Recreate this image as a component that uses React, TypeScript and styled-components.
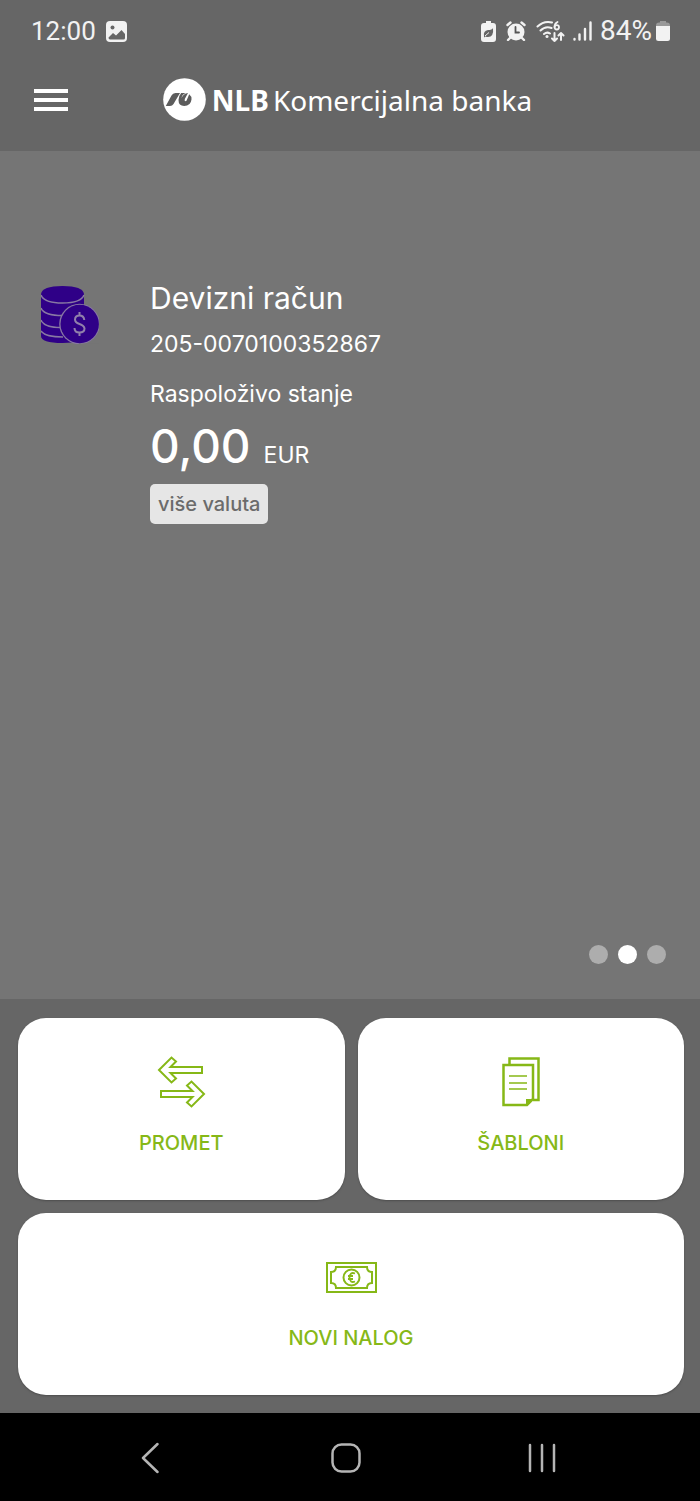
import React from "react";
import styled, { createGlobalStyle } from "styled-components";

const GlobalStyle = createGlobalStyle`
  * { box-sizing: border-box; }
  body { margin: 0; background: #666666; }
  button { font: inherit; color: inherit; border: 0; padding: 0; background: none; cursor: pointer; }
  svg { display: block; flex: none; }
`;

const Screen = styled.div`
  min-height: 100vh;
  display: flex;
  flex-direction: column;
  color: #ffffff;
  font-family: Inter, "Open Sans", sans-serif;
`;

const StatusBar = styled.div`
  display: flex;
  justify-content: space-between;
  align-items: center;
  height: 62px;
  padding: 0 30px 0 31px;
  color: #f2f2f2;
  font-family: Roboto, sans-serif;
  font-size: 26px;
  line-height: 32px;
`;

const StatusGroup = styled.div<{ $gap: number }>`
  display: flex;
  align-items: center;
  gap: ${({ $gap }) => $gap}px;
`;

const BatteryLevel = styled.span`
  font-size: 28px;
`;

const Header = styled.header`
  display: grid;
  grid-template-columns: 1fr auto 1fr;
  align-items: center;
  height: 89px;
  padding: 0 39px 14px 34px;
`;

const MenuButton = styled.button`
  justify-self: start;
`;

const Brand = styled.div`
  display: flex;
  align-items: center;
  gap: 6px;
  font-family: "Noto Sans", sans-serif;
  font-size: 28px;
  line-height: 40px;
  white-space: nowrap;
`;

const BrandName = styled.span`
  display: flex;
  gap: 4px;
`;

const AccountPanel = styled.main`
  flex: 1;
  display: flex;
  flex-direction: column;
  justify-content: space-between;
  padding: 129px 34px 35px 41px;
  background: #757575;
`;

const Account = styled.section`
  display: grid;
  grid-template-columns: 58px 1fr;
  column-gap: 51px;
`;

const AccountIcon = styled.div`
  padding-top: 6px;
`;

const Details = styled.div`
  display: flex;
  flex-direction: column;
  align-items: flex-start;
`;

const Title = styled.h1`
  margin: 0;
  font-size: 30px;
  font-weight: 400;
  line-height: 36px;
`;

const Line = styled.p<{ $top: number }>`
  margin: ${({ $top }) => $top}px 0 0;
  font-size: 23px;
  line-height: 28px;
`;

const Balance = styled.p`
  display: flex;
  align-items: baseline;
  gap: 13px;
  margin: 10px 0 1px;
  font-size: 23px;
  line-height: 56px;
`;

const Amount = styled.strong`
  font-size: 46px;
  font-weight: 500;
`;

const CurrencyButton = styled.button`
  height: 40px;
  padding: 0 8px;
  border-radius: 5px;
  background: #e6e6e6;
  color: #6b6b6b;
  font-size: 20px;
  font-weight: 500;
  line-height: 24px;
`;

const Dots = styled.nav`
  display: flex;
  justify-content: flex-end;
  gap: 10px;
`;

const Dot = styled.button<{ $active?: boolean }>`
  width: 19px;
  height: 19px;
  border-radius: 50%;
  background: ${({ $active }) => ($active ? "#ffffff" : "#adadad")};
`;

const Actions = styled.section`
  display: grid;
  grid-template-columns: 1fr 1fr;
  gap: 13px;
  padding: 19px 16px 18px 18px;
`;

const ActionCard = styled.button<{ $wide?: boolean }>`
  display: flex;
  flex-direction: column;
  align-items: center;
  justify-content: flex-end;
  gap: 22px;
  height: 182px;
  padding-bottom: 45px;
  grid-column: ${({ $wide }) => ($wide ? "1 / -1" : "auto")};
  border-radius: 28px;
  background: #ffffff;
  box-shadow: 0 1px 2px #4d4d4d;
  color: #86b817;
  font-size: 20px;
  font-weight: 500;
  line-height: 24px;
`;

const IconSlot = styled.span`
  display: flex;
  align-items: center;
  height: 54px;
`;

const SystemNav = styled.nav`
  display: grid;
  grid-template-columns: repeat(3, 1fr);
  height: 88px;
  padding: 2px 60px 0 52px;
  background: #000000;
`;

const NavButton = styled.button`
  display: flex;
  align-items: center;
  justify-content: center;
  color: #b5b5b5;
`;

const ImageIcon = () => (
  <svg width="21" height="21" viewBox="0 0 21 21">
    <rect width="21" height="21" rx="4" fill="#f2f2f2" />
    <circle cx="6.5" cy="6.5" r="2" fill="#666" />
    <path d="M2.5 16.5 7 12l3 2.5L15.5 9l3.500 4v4q0 1.500-1.500 1.500H4q-1.500 0-1.500-2Z" fill="#666" />
  </svg>
);

const SaverIcon = () => (
  <svg width="15" height="21" viewBox="0 0 15 21" fill="#f2f2f2">
    <path d="M5 0h5v2h2q3 0 3 3v13q0 3-3 3H3q-3 0-3-3V5q0-3 3-3h2Z" />
    <path d="M3 15q-1-5 4-6 4 0 5-2 1 9-5 9-1.500 0-2.500-.6L3 16.500Z" fill="#666" />
    <path d="m4 15 4-3.500" stroke="#f2f2f2" />
  </svg>
);

const AlarmIcon = () => (
  <svg width="20" height="20" viewBox="0 0 20 20" fill="none" stroke="#f2f2f2" strokeLinecap="round">
    <circle cx="10" cy="11" r="8.500" fill="#f2f2f2" stroke="none" />
    <path d="M1.500 4 4.500 1.500M18.500 4l-3-2.500M4 17l-2 2M16 17l2 2" strokeWidth="2.400" />
    <path d="M9.500 6v5.500H13" stroke="#555" strokeWidth="1.800" />
  </svg>
);

const WifiIcon = () => (
  <svg width="29" height="21" viewBox="0 0 29 21" fill="none" stroke="#f2f2f2" strokeWidth="2" strokeLinecap="round" strokeLinejoin="round">
    <path d="M1.500 5.500Q8-.5 16 1.500M4.500 9.500q5-5 11-2.500M8 13q3-2.500 6-.500" />
    <circle cx="11" cy="15.500" r="1.500" fill="#f2f2f2" stroke="none" />
    <path d="M21.500 1Q18.500 2.500 18.500 6" strokeWidth="1.800" />
    <circle cx="20.800" cy="6.300" r="2.200" strokeWidth="1.800" />
    <path d="M18.500 12v8m-2.500-2.500 2.500 2.500 2.500-2.500M25 19v-7m-2.500 2.500L25 12l2.500 2.500" />
  </svg>
);

const SignalIcon = () => (
  <svg width="19" height="20" viewBox="0 0 19 20" stroke="#f2f2f2" strokeWidth="2.400" strokeLinecap="round">
    <path d="M1.500 18v.5M6.500 13.500v5M12 8v10.500M17.500 1.500v17" />
  </svg>
);

const BatteryIcon = () => (
  <svg width="14" height="20" viewBox="0 0 14 20">
    <path d="M4 0h6v1.500h1q3 0 3 3V6H0V4.500q0-3 3-3h1Z" fill="#999" />
    <path d="M0 5h14v12.500q0 2.500-2.500 2.500h-9Q0 20 0 17.500Z" fill="#f2f2f2" />
  </svg>
);

const MenuIcon = () => (
  <svg width="34" height="24" viewBox="0 0 34 24" fill="#ffffff">
    <path d="M0 1h34v4H0ZM0 10h34v4H0ZM0 19h34v4H0Z" />
  </svg>
);

const BrandMark = () => (
  <svg width="43" height="43" viewBox="0 0 43 43">
    <circle cx="21.500" cy="21.500" r="21.300" fill="#fff" />
    <path d="M2.800 28 8.500 17.500Q9.800 15 12.500 15H17L10.500 26Q9.300 28 7 28Z" fill="#5c5c5c" />
    <path d="M18.200 15h4.300q-3.500 1.500-4 5 2-4.500 6.500-5l-3.200 6q-.6 2.200.7 2.200 1.200 0 1.500-1.700l2.200-5.200q2.600 2 2.300 5.200-.8 6.500-7.300 6.500-5.700-.2-5.700-6 0-4 2.700-7Z" fill="#5c5c5c" />
  </svg>
);

const CoinsIcon = () => (
  <svg width="58" height="58" viewBox="0 0 58 58">
    <path d="M0 8Q1 0 21.500 0T43 8v40q0 9-21.500 9T0 50Z" fill="#2f0087" />
    <path d="M0 9q3 8 21.500 8T43 9M0 22q3 7.500 21.500 7.500 6 0 8-1M0 34q3 7.500 20 7.500M0 45q4 6 22 6" fill="none" stroke="#8878a3" strokeWidth="1.500" />
    <circle cx="38.500" cy="38" r="20.300" fill="#8878a3" />
    <path d="M38 57.500h20V60H38Z" fill="#757575" />
    <circle cx="38.700" cy="38" r="19.200" fill="#2f0087" />
    <path d="M43.300 34q-.5-4.500-4.800-4.500t-4.500 4q0 3 4.500 4.500t5 4.500q0 4-5 4t-5-4.500M38.500 26v3.500M38.500 46.500V50" fill="none" stroke="#9180ab" strokeWidth="2" />
  </svg>
);

const TransferIcon = () => (
  <svg width="49" height="52" viewBox="0 0 49 52" fill="none" stroke="#86b817" strokeWidth="2">
    <path d="M2 14 14.500 1.500 19 5.500 13.500 11H45v6H13.500L19 22.500 14.500 26.500Z" />
    <path d="M47 38 34.500 25.500 30 29.500 35.500 35H4v6h31.500L30 46.500l4.500 4Z" />
  </svg>
);

const TemplatesIcon = () => (
  <svg width="38" height="50" viewBox="0 0 38 50" fill="none" stroke="#86b817" strokeWidth="2">
    <path d="M7.500 7V1.500H36.500V43H31" strokeWidth="2.500" />
    <path d="M1.500 8H31v34l-6 6H1.500Z" strokeWidth="2.500" />
    <path d="M24 49v-7h7Z" fill="#86b817" stroke="none" />
    <path d="M7 19h18M7 26h18M7 32h18" strokeWidth="1.500" />
  </svg>
);

const BanknoteIcon = () => (
  <svg width="51" height="31" viewBox="0 0 51 31" fill="none" stroke="#86b817" strokeWidth="2">
    <rect x="1" y="1" width="49" height="29" />
    <path d="M10 5h31q0 5 5 5v11q-5 0-5 5H10q0-5-5-5V10q5 0 5-5Z" />
    <circle cx="25.500" cy="15.500" r="8" />
    <path d="M29 11.500q-5-2-5.500 4 .5 6 5.500 4M22 14h5M22 17h5" strokeWidth="1.800" />
  </svg>
);

const BackIcon = () => (
  <svg width="18" height="32" viewBox="0 0 18 32" fill="none" stroke="currentColor" strokeWidth="2.500" strokeLinecap="round" strokeLinejoin="round">
    <path d="M16.500 2 2 16l14.500 14" />
  </svg>
);

const HomeIcon = () => (
  <svg width="30" height="30" viewBox="0 0 30 30" fill="none" stroke="currentColor" strokeWidth="2.500">
    <rect x="1.500" y="1.500" width="27" height="27" rx="9" />
  </svg>
);

const RecentsIcon = () => (
  <svg width="28" height="30" viewBox="0 0 28 30" stroke="currentColor" strokeWidth="2.500" strokeLinecap="round">
    <path d="M2 2v26M14 2v26M26 2v26" />
  </svg>
);

const actions = [
  { label: "PROMET", icon: <TransferIcon />, wide: false },
  { label: "ŠABLONI", icon: <TemplatesIcon />, wide: false },
  { label: "NOVI NALOG", icon: <BanknoteIcon />, wide: true },
];

const pages = [1, 2, 3];

export default function App() {
  return (
    <Screen>
      <GlobalStyle />
      <StatusBar>
        <StatusGroup $gap={10}>
          <span>12:00</span>
          <ImageIcon />
        </StatusGroup>
        <StatusGroup $gap={8}>
          <StatusGroup $gap={10}>
            <SaverIcon />
            <AlarmIcon />
            <WifiIcon />
          </StatusGroup>
          <SignalIcon />
          <StatusGroup $gap={4}>
            <BatteryLevel>84%</BatteryLevel>
            <BatteryIcon />
          </StatusGroup>
        </StatusGroup>
      </StatusBar>
      <Header>
        <MenuButton aria-label="Meni">
          <MenuIcon />
        </MenuButton>
        <Brand>
          <BrandMark />
          <BrandName>
            <b>NLB</b>
            <span>Komercijalna banka</span>
          </BrandName>
        </Brand>
      </Header>
      <AccountPanel>
        <Account>
          <AccountIcon>
            <CoinsIcon />
          </AccountIcon>
          <Details>
            <Title>Devizni račun</Title>
            <Line $top={14}>205-0070100352867</Line>
            <Line $top={22}>Raspoloživo stanje</Line>
            <Balance>
              <Amount>0,00</Amount>
              <span>EUR</span>
            </Balance>
            <CurrencyButton>više valuta</CurrencyButton>
          </Details>
        </Account>
        <Dots aria-label="Računi">
          {pages.map((page) => (
            <Dot key={page} $active={page === 2} aria-label={`Račun ${page}`} />
          ))}
        </Dots>
      </AccountPanel>
      <Actions>
        {actions.map(({ label, icon, wide }) => (
          <ActionCard key={label} $wide={wide}>
            <IconSlot>{icon}</IconSlot>
            <span>{label}</span>
          </ActionCard>
        ))}
      </Actions>
      <SystemNav aria-label="Sistem">
        <NavButton aria-label="Nazad">
          <BackIcon />
        </NavButton>
        <NavButton aria-label="Početna">
          <HomeIcon />
        </NavButton>
        <NavButton aria-label="Nedavno">
          <RecentsIcon />
        </NavButton>
      </SystemNav>
    </Screen>
  );
}
